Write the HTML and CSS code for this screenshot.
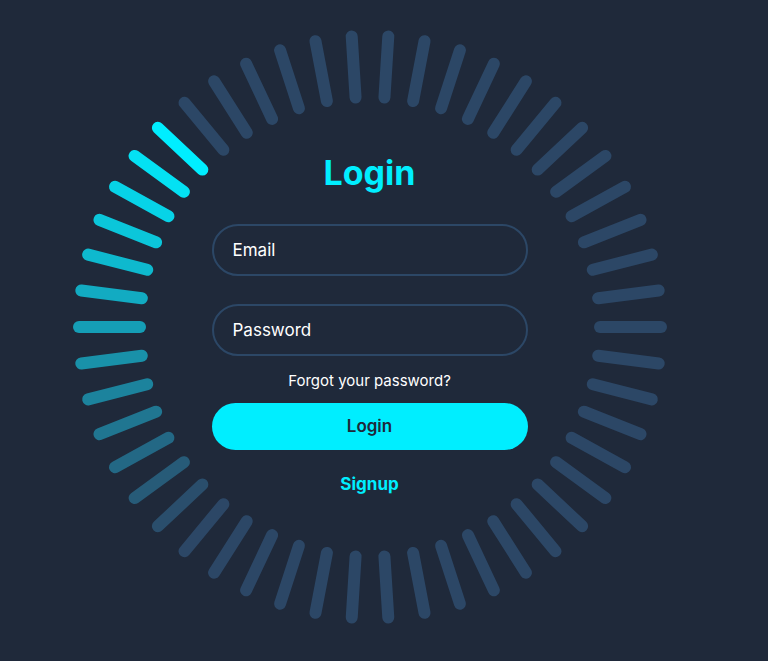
FILE: index.html
```html
<!DOCTYPE html>
<html lang="en">
<head>
<meta charset="utf-8">
<title>Login</title>
<link rel="stylesheet" href="styles.css">
</head>
<body>
<main class="ring">
  <div class="bars" aria-hidden="true">
    <span class="bar"></span><span class="bar"></span><span class="bar"></span><span class="bar"></span><span class="bar"></span>
    <span class="bar"></span><span class="bar"></span><span class="bar"></span><span class="bar"></span><span class="bar"></span>
    <span class="bar"></span><span class="bar"></span><span class="bar"></span><span class="bar"></span><span class="bar"></span>
    <span class="bar"></span><span class="bar"></span><span class="bar"></span><span class="bar"></span><span class="bar"></span>
    <span class="bar"></span><span class="bar"></span><span class="bar"></span><span class="bar"></span><span class="bar"></span>
    <span class="bar"></span><span class="bar"></span><span class="bar"></span><span class="bar"></span><span class="bar"></span>
    <span class="bar"></span><span class="bar"></span><span class="bar"></span><span class="bar"></span><span class="bar"></span>
    <span class="bar"></span><span class="bar"></span><span class="bar"></span><span class="bar"></span><span class="bar"></span>
    <span class="bar"></span><span class="bar"></span><span class="bar"></span><span class="bar"></span><span class="bar"></span>
    <span class="bar"></span><span class="bar"></span><span class="bar"></span><span class="bar"></span><span class="bar"></span>
  </div>
  <form class="login-box">
    <h2 class="title">Login</h2>
    <input class="field field-email" type="email" placeholder="Email">
    <input class="field field-pass" type="password" placeholder="Password">
    <a class="forgot" href="#">Forgot your password?</a>
    <button class="btn" type="button">Login</button>
    <a class="signup" href="#">Signup</a>
  </form>
</main>
</body>
</html>
```

FILE: styles.css
```css
* { box-sizing: border-box; }

html, body { margin: 0; }

body {
  min-height: 100vh;
  background: #1f293a;
  display: flex;
  justify-content: center;
  align-items: center;
  padding: 0 29px 8px 0;
  overflow: hidden;
  font-family: Inter, "Noto Sans", sans-serif;
}

.ring {
  position: relative;
  width: 594px;
  height: 594px;
  display: grid;
}

.bars {
  position: absolute;
  inset: 0;
}

.bar {
  position: absolute;
  left: 0;
  top: 291px;
  width: 73px;
  height: 12px;
  border-radius: 8px;
  background: #2c4766;
  transform-origin: 297px 6px;
}

.bar:nth-child(1)  { transform: rotate(0deg);     background: #159eb6; }
.bar:nth-child(2)  { transform: rotate(7.2deg);   background: #12abc2; }
.bar:nth-child(3)  { transform: rotate(14.4deg);  background: #0eb9ce; }
.bar:nth-child(4)  { transform: rotate(21.6deg);  background: #0bc6da; }
.bar:nth-child(5)  { transform: rotate(28.8deg);  background: #07d3e7; }
.bar:nth-child(6)  { transform: rotate(36deg);    background: #04e1f3; }
.bar:nth-child(7)  { transform: rotate(43.2deg);  background: #00eeff; }
.bar:nth-child(8)  { transform: rotate(50.4deg); }
.bar:nth-child(9)  { transform: rotate(57.6deg); }
.bar:nth-child(10) { transform: rotate(64.8deg); }
.bar:nth-child(11) { transform: rotate(72deg); }
.bar:nth-child(12) { transform: rotate(79.2deg); }
.bar:nth-child(13) { transform: rotate(86.4deg); }
.bar:nth-child(14) { transform: rotate(93.6deg); }
.bar:nth-child(15) { transform: rotate(100.8deg); }
.bar:nth-child(16) { transform: rotate(108deg); }
.bar:nth-child(17) { transform: rotate(115.2deg); }
.bar:nth-child(18) { transform: rotate(122.4deg); }
.bar:nth-child(19) { transform: rotate(129.6deg); }
.bar:nth-child(20) { transform: rotate(136.8deg); }
.bar:nth-child(21) { transform: rotate(144deg); }
.bar:nth-child(22) { transform: rotate(151.2deg); }
.bar:nth-child(23) { transform: rotate(158.4deg); }
.bar:nth-child(24) { transform: rotate(165.6deg); }
.bar:nth-child(25) { transform: rotate(172.8deg); }
.bar:nth-child(26) { transform: rotate(180deg); }
.bar:nth-child(27) { transform: rotate(187.2deg); }
.bar:nth-child(28) { transform: rotate(194.4deg); }
.bar:nth-child(29) { transform: rotate(201.6deg); }
.bar:nth-child(30) { transform: rotate(208.8deg); }
.bar:nth-child(31) { transform: rotate(216deg); }
.bar:nth-child(32) { transform: rotate(223.2deg); }
.bar:nth-child(33) { transform: rotate(230.4deg); }
.bar:nth-child(34) { transform: rotate(237.6deg); }
.bar:nth-child(35) { transform: rotate(244.8deg); }
.bar:nth-child(36) { transform: rotate(252deg); }
.bar:nth-child(37) { transform: rotate(259.2deg); }
.bar:nth-child(38) { transform: rotate(266.4deg); }
.bar:nth-child(39) { transform: rotate(273.6deg); }
.bar:nth-child(40) { transform: rotate(280.8deg); }
.bar:nth-child(41) { transform: rotate(288deg); }
.bar:nth-child(42) { transform: rotate(295.2deg); }
.bar:nth-child(43) { transform: rotate(302.4deg); }
.bar:nth-child(44) { transform: rotate(309.6deg); }
.bar:nth-child(45) { transform: rotate(316.8deg);  background: #2a4e6c; }
.bar:nth-child(46) { transform: rotate(324deg);    background: #275b78; }
.bar:nth-child(47) { transform: rotate(331.2deg);  background: #236885; }
.bar:nth-child(48) { transform: rotate(338.4deg);  background: #207691; }
.bar:nth-child(49) { transform: rotate(345.6deg);  background: #1c839d; }
.bar:nth-child(50) { transform: rotate(352.8deg);  background: #1991a9; }

.login-box {
  grid-area: 1 / 1;
  align-self: start;
  justify-self: center;
  position: relative;
  width: 316px;
  margin-top: 123.5px;
  display: flex;
  flex-direction: column;
  align-items: stretch;
}

.title {
  margin: 0;
  font-size: 34px;
  line-height: 40px;
  font-weight: 700;
  color: #00eeff;
  text-align: center;
}

.field {
  display: block;
  width: 100%;
  height: 52px;
  margin: 31px 0 0;
  padding: 0 19px;
  background: transparent;
  border: 2px solid #2c4766;
  border-radius: 40px;
  outline: none;
  font-family: inherit;
  font-size: 17px;
  color: #fff;
}

.field-pass { margin-top: 27.5px; }

.field::placeholder {
  color: #fff;
  opacity: 1;
}

.forgot {
  margin-top: 15px;
  font-size: 15px;
  line-height: 20px;
  color: #fff;
  text-decoration: none;
  text-align: center;
}

.btn {
  margin-top: 12px;
  height: 47px;
  border: none;
  border-radius: 40px;
  background: #00eeff;
  color: #1f293a;
  font-family: inherit;
  font-size: 17px;
  font-weight: 600;
}

.signup {
  margin-top: 22px;
  font-size: 17px;
  line-height: 24px;
  font-weight: 700;
  color: #00eeff;
  text-decoration: none;
  text-align: center;
}
```
